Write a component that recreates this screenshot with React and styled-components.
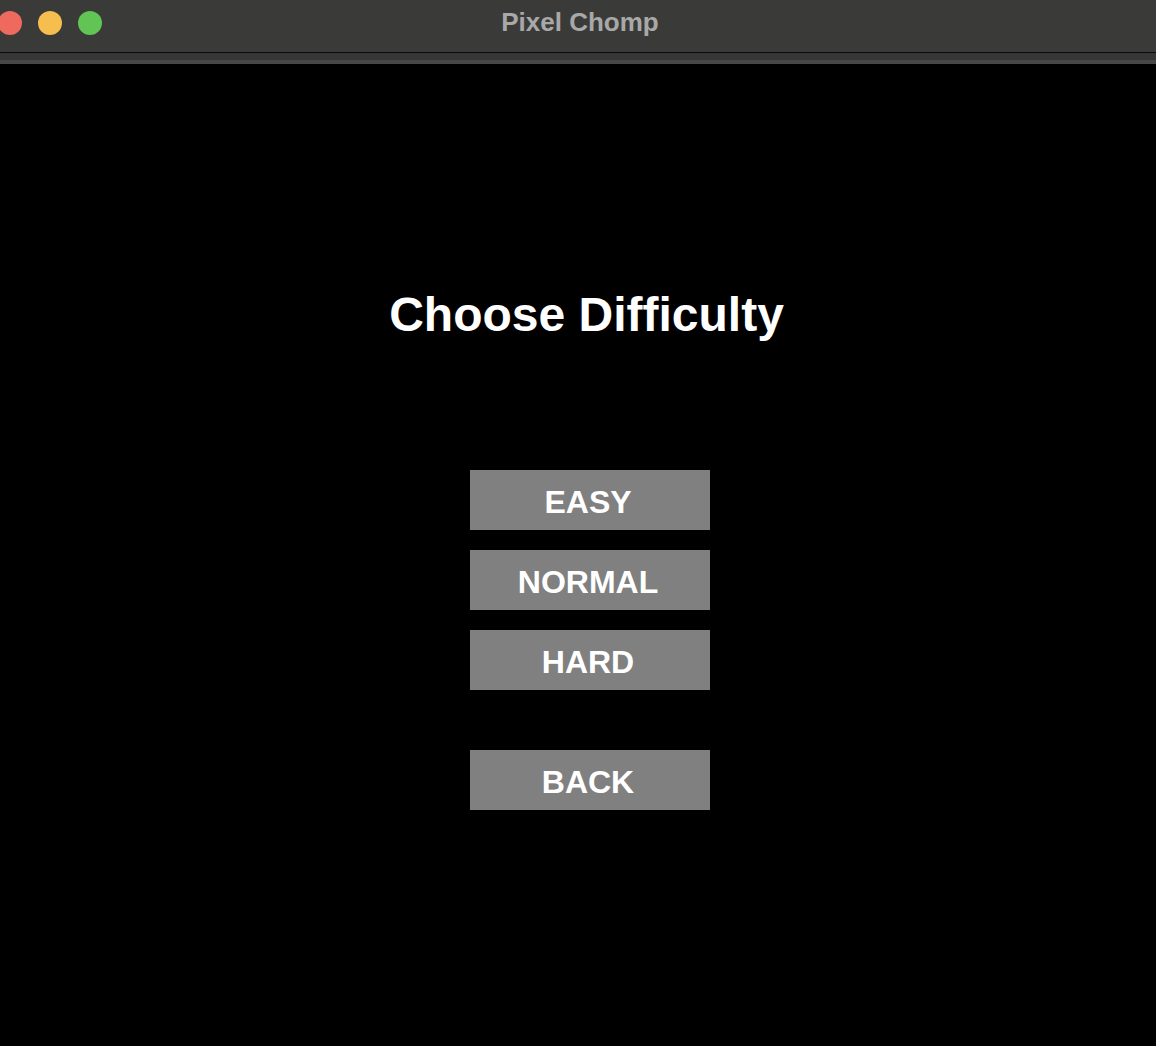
import React from "react";
import styled, { createGlobalStyle } from "styled-components";

const GlobalStyle = createGlobalStyle`
  html, body {
    margin: 0;
    padding: 0;
    background: #000;
  }
  body {
    font-family: "Liberation Sans", Arial, sans-serif;
  }
`;

const Window = styled.div`
  width: 1156px;
  height: 1046px;
  display: flex;
  flex-direction: column;
  background: #000;
  overflow: hidden;
`;

const TitleBar = styled.div`
  position: relative;
  height: 52px;
  flex-shrink: 0;
  display: flex;
  align-items: center;
  justify-content: center;
  background: #3a3a39;
  border-bottom: 1px solid #0a0a0a;
`;

const Lights = styled.div`
  position: absolute;
  left: -2px;
  top: 11px;
  display: flex;
  gap: 16px;
`;

const Light = styled.span`
  width: 24px;
  height: 24px;
  border-radius: 50%;
  background: ${(p) => p.color};
`;

const WindowTitle = styled.div`
  font-family: "Liberation Sans", Arial, sans-serif;
  font-weight: 700;
  font-size: 26px;
  color: #a8a8a8;
  margin-left: 4px;
  margin-top: -8px;
`;

const ToolStrip = styled.div`
  height: 7px;
  flex-shrink: 0;
  background: #363636;
  border-bottom: 4px solid #474747;
`;

const Screen = styled.main`
  flex: 1;
  display: flex;
  flex-direction: column;
  align-items: center;
  padding-top: 220px;
`;

const Heading = styled.h1`
  margin: 0 0 0 17px;
  font-size: 48px;
  font-weight: 700;
  color: #fff;
  line-height: 62px;
`;

const Menu = styled.div`
  display: flex;
  flex-direction: column;
  gap: 20px;
  margin-top: 124px;
  margin-left: 24px;
`;

const MenuButton = styled.button`
  width: 240px;
  height: 60px;
  border: none;
  background: #808080;
  color: #fff;
  font-family: "Liberation Sans", Arial, sans-serif;
  font-weight: 700;
  font-size: 32px;
  padding: 4px 4px 0 0;
  margin-top: ${(p) => (p.spaced ? "40px" : "0")};
  cursor: pointer;
`;

export default function App() {
  return (
    <>
      <GlobalStyle />
      <Window>
        <TitleBar>
          <Lights>
            <Light color="#ee6a5f" />
            <Light color="#f5be4f" />
            <Light color="#61c454" />
          </Lights>
          <WindowTitle>Pixel Chomp</WindowTitle>
        </TitleBar>
        <ToolStrip />
        <Screen>
          <Heading>Choose Difficulty</Heading>
          <Menu>
            <MenuButton>EASY</MenuButton>
            <MenuButton>NORMAL</MenuButton>
            <MenuButton>HARD</MenuButton>
            <MenuButton spaced>BACK</MenuButton>
          </Menu>
        </Screen>
      </Window>
    </>
  );
}
